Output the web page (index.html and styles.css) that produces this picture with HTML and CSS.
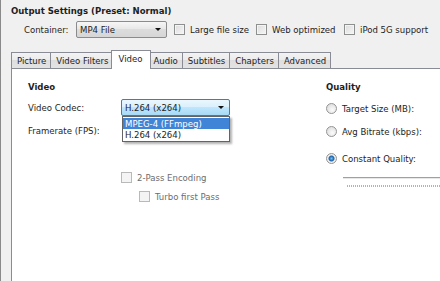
FILE: index.html
```html
<!DOCTYPE html>
<html>
<head>
<meta charset="utf-8">
<link rel="stylesheet" href="styles.css">
</head>
<body>
<div class="window">
  <h1 class="title">Output Settings (Preset: Normal)</h1>
  <div class="container-row">
    <span class="lbl">Container:</span>
    <div class="select select-container"><span>MP4 File</span><span class="arrow"></span></div>
    <label class="check chk-large"><span class="box"></span>Large file size</label>
    <label class="check chk-web"><span class="box"></span>Web optimized</label>
    <label class="check chk-ipod"><span class="box"></span>iPod 5G support</label>
  </div>
  <div class="tabs">
    <div class="tab">Picture</div>
    <div class="tab">Video Filters</div>
    <div class="tab active">Video</div>
    <div class="tab">Audio</div>
    <div class="tab">Subtitles</div>
    <div class="tab">Chapters</div>
    <div class="tab last">Advanced</div>
  </div>
  <div class="panel">
    <div class="col-left">
      <div class="section">Video</div>
      <div class="row row-codec">
        <span class="lbl">Video Codec:</span>
        <div class="select select-codec">
          <span>H.264 (x264)</span><span class="arrow"></span>
          <div class="dropdown">
            <div class="item selected">MPEG-4 (FFmpeg)</div>
            <div class="item">H.264 (x264)</div>
          </div>
        </div>
      </div>
      <div class="row row-fps">
        <span class="lbl">Framerate (FPS):</span>
      </div>
      <label class="check disabled pass2"><span class="box"></span>2-Pass Encoding</label>
      <label class="check disabled turbo"><span class="box"></span>Turbo first Pass</label>
    </div>
    <div class="col-right">
      <div class="section">Quality</div>
      <label class="radio r1"><span class="dot"></span>Target Size (MB):</label>
      <label class="radio r2"><span class="dot"></span>Avg Bitrate (kbps):</label>
      <label class="radio r3 checked"><span class="dot"></span>Constant Quality:</label>
      <div class="slider">
        <div class="track"></div>
        <div class="ticks"></div>
      </div>
    </div>
  </div>
</div>
</body>
</html>
```
FILE: styles.css
```css
* { box-sizing: border-box; }
html, body { margin: 0; padding: 0; }
body {
  width: 440px;
  height: 281px;
  overflow: hidden;
  background: #f0f0f0;
  font-family: "DejaVu Sans Condensed", "DejaVu Sans", sans-serif;
  font-size: 9.5px;
  color: #1e1e1e;
}
.window {
  display: flex;
  flex-direction: column;
  height: 281px;
  border-left: 1px solid #8a8a8a;
  padding-left: 10px;
}
.title {
  margin: 0;
  padding-top: 5px;
  font-size: 9.5px;
  font-weight: bold;
  line-height: 11px;
}
.container-row {
  display: flex;
  align-items: center;
  margin-top: 5px;
  height: 17px;
  padding-left: 13px;
}
.container-row .lbl { width: 52px; }
.select {
  position: relative;
  display: flex;
  align-items: center;
  height: 17px;
  border: 1px solid #8b8b8b;
  border-radius: 2px;
  background: linear-gradient(#f6f6f6, #e6e6e6 50%, #dcdcdc 50%, #d6d6d6);
  padding-left: 3px;
  padding-right: 5px;
}
.select-container { width: 91px; }
.arrow {
  margin-left: auto;
  width: 0;
  height: 0;
  border-left: 3px solid transparent;
  border-right: 3px solid transparent;
  border-top: 3px solid #111;
}
.check {
  display: flex;
  align-items: center;
  gap: 5px;
  height: 12px;
}
.box {
  width: 11px;
  height: 11px;
  border: 1px solid #8e8f8f;
  background: linear-gradient(135deg, #dcdcdc, #f6f6f6);
  box-shadow: inset 0 0 0 1px #f4f4f4;
}
.chk-large { margin-left: 7px; width: 82px; }
.chk-web { width: 88px; }
.tabs {
  display: flex;
  align-items: flex-end;
  margin-top: 12px;
  height: 18px;
}
.tab {
  height: 16px;
  line-height: 15px;
  padding: 0 4px 0 5px;
  border: 1px solid #898c95;
  border-bottom: none;
  border-right: none;
  background: linear-gradient(#f3f3f3, #ebebeb 50%, #dedede 50%, #e3e3e3);
}
.tab.last { border-right: 1px solid #898c95; }
.tab.active {
  position: relative;
  z-index: 1;
  height: 19px;
  margin-bottom: -1px;
  line-height: 16px;
  padding: 0 7px;
  margin-left: -2px;
  margin-right: -2px;
  border-right: 1px solid #898c95;
  background: #ffffff;
}
.tab.active + .tab { border-left: none; }
.panel {
  flex: 1;
  display: flex;
  background: #ffffff;
  border-top: 1px solid #898c95;
  border-left: 1px solid #898c95;
  padding: 12px 0 0 16px;
}
.col-left {
  width: 298px;
  display: flex;
  flex-direction: column;
}
.col-right {
  flex: 1;
  display: flex;
  flex-direction: column;
}
.section {
  font-weight: bold;
  line-height: 11px;
}
.row {
  display: flex;
  align-items: center;
  height: 17px;
}
.row .lbl { width: 93px; }
.row-codec { margin-top: 7px; }
.row-fps { margin-top: 6px; }
.select-codec {
  width: 109px;
  border-color: #3c7fb1;
  background: linear-gradient(#eaf6fd, #d9f0fc 50%, #bee6fd 50%, #a7d9f5);
}
.dropdown {
  position: absolute;
  top: 16px;
  left: 0;
  width: 108px;
  border: 1px solid #646464;
  background: #ffffff;
  box-shadow: 2px 2px 2px rgba(0, 0, 0, 0.3);
  z-index: 5;
  padding: 1px 0;
}
.item {
  height: 11px;
  line-height: 11px;
  padding-left: 2px;
  color: #1e1e1e;
}
.item.selected {
  background: #3f84d6;
  color: #ffffff;
}
.disabled { color: #6d6d6d; }
.disabled .box {
  background: #f4f4f4;
  border-color: #b9b9b9;
}
.pass2 { margin-top: 32px; padding-left: 93px; }
.turbo { margin-top: 7px; padding-left: 111px; }
.radio {
  display: flex;
  align-items: center;
  gap: 5px;
  height: 12px;
}
.dot {
  width: 11px;
  height: 11px;
  border-radius: 50%;
  border: 1px solid #949494;
  background: radial-gradient(circle at 60% 65%, #fbfbfb, #d6d6d6);
}
.checked .dot {
  background: radial-gradient(circle, #6fc3f2 0, #1d5fa8 2.5px, #f4f4f4 3.5px, #dcdcdc);
}
.r1 { margin-top: 10px; }
.r2 { margin-top: 11px; }
.r3 { margin-top: 15px; }
.slider {
  margin-top: 13px;
  margin-left: 17px;
}
.track {
  height: 2px;
  border-top: 1px solid #a0a0a0;
  border-bottom: 1px solid #e8e8e8;
}
.ticks {
  margin-top: 6px;
  margin-left: 4px;
  height: 2px;
  background: repeating-linear-gradient(90deg, #b4b4b4 0 1px, transparent 1px 2px);
}
```
